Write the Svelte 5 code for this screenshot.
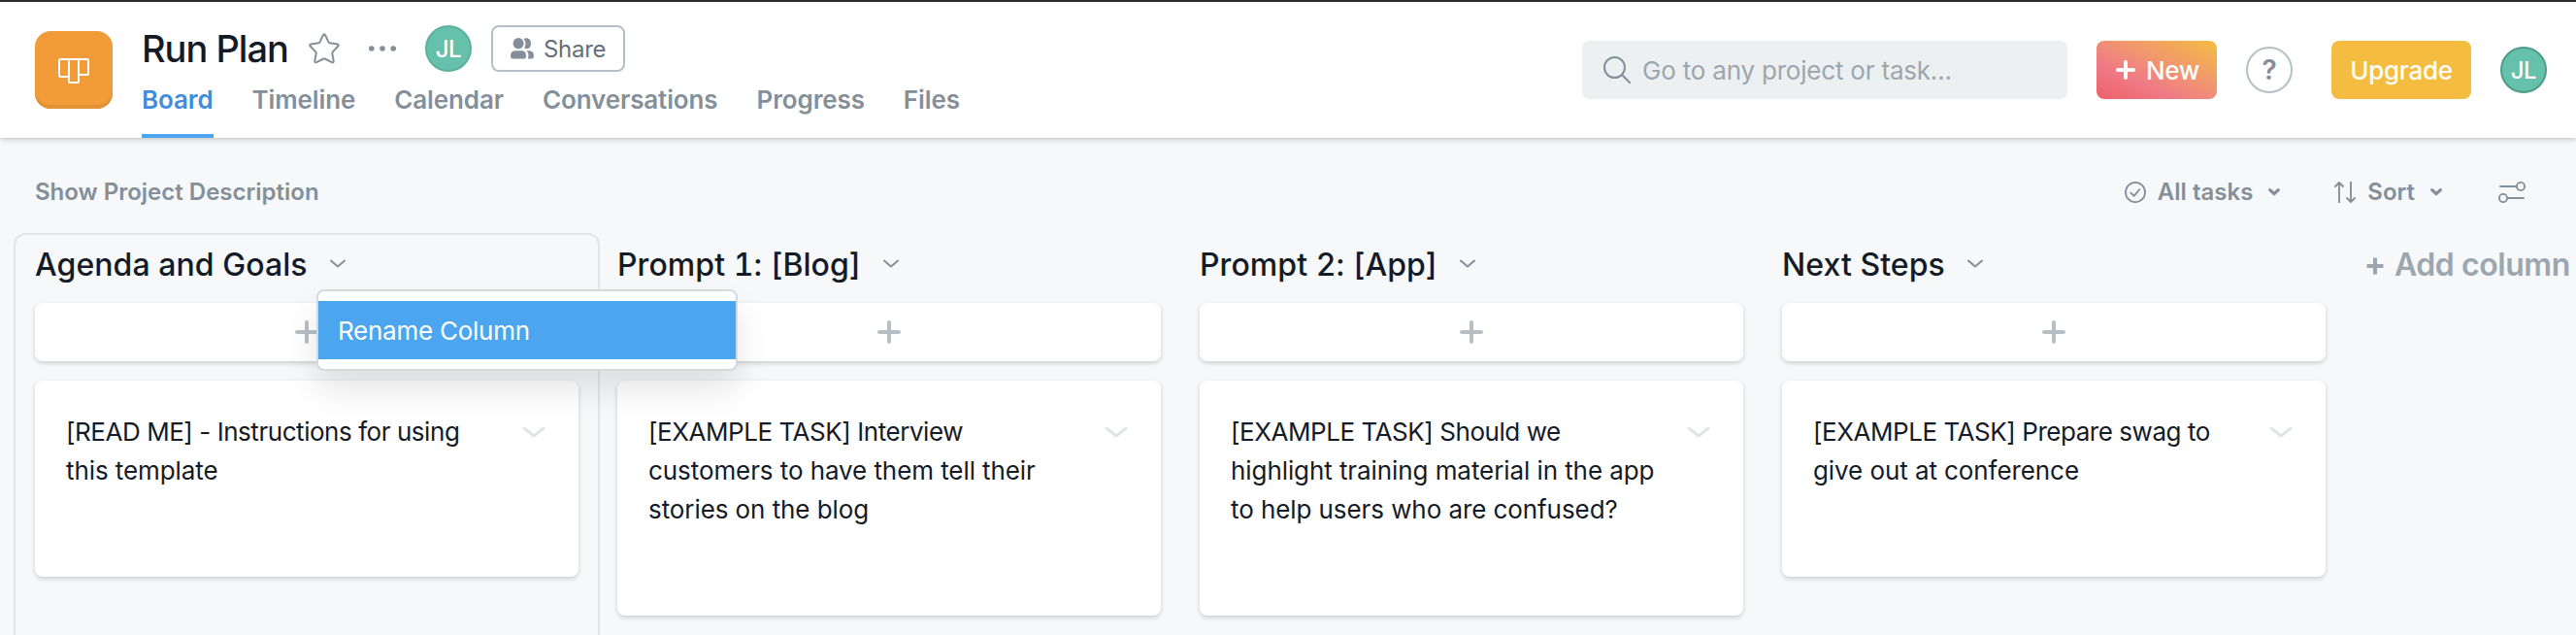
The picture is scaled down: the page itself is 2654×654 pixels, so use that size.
<script>
  const tabs = ["Board", "Timeline", "Calendar", "Conversations", "Progress", "Files"];
  let activeTab = $state("Board");
  let search = $state("");

  // column whose dropdown is open
  let openMenu = $state(0);

  const columns = [
    { name: "Agenda and Goals", tasks: ["[READ ME] - Instructions for using this template"] },
    {
      name: "Prompt 1: [Blog]",
      tasks: ["[EXAMPLE TASK] Interview customers to have them tell their stories on the blog"],
    },
    {
      name: "Prompt 2: [App]",
      tasks: ["[EXAMPLE TASK] Should we highlight training material in the app to help users who are confused?"],
    },
    { name: "Next Steps", tasks: ["[EXAMPLE TASK] Prepare swag to give out at conference"] },
  ];

  function toggleMenu(i) {
    openMenu = openMenu === i ? -1 : i;
  }
</script>

{#snippet smallChevron()}
  <svg class="smallChevron" width="12" height="8" viewBox="0 0 12 8">
    <path d="M1.7 1.7 L6 5.7 L10.3 1.7" />
  </svg>
{/snippet}

<div class="page">
  <header class="topbar">
    <div class="projectIcon">
      <svg width="32" height="26" viewBox="0 0 32 26">
        <path d="M11 19 H2.5 Q1 19 1 17.5 V2.5 Q1 1 2.5 1 H29.5 Q31 1 31 2.5 V15.5 Q31 17 29.5 17 H21" />
        <path d="M11 1 V23.5 Q11 25 12.5 25 H19.5 Q21 25 21 23.5 V1" />
      </svg>
    </div>

    <div class="project">
      <div class="titleRow">
        <h1>Run Plan</h1>
        <svg class="star" width="32" height="32" viewBox="0 0 32 32">
          <path
            d="M14.9 2.2 Q16 0.4 17.1 2.2 L20.6 9.6 Q20.9 10.2 21.6 10.3 L29.6 11.5 Q31.6 12 30.3 13.5 L24.6 19.6 Q24.1 20.1 24.3 20.8 L25.7 28.9 Q25.7 31 23.8 30.2 L16.7 26.5 Q16 26.1 15.3 26.5 L8.2 30.2 Q6.3 31 6.3 28.9 L7.7 20.8 Q7.9 20.1 7.4 19.6 L1.7 13.5 Q0.4 12 2.4 11.5 L10.4 10.3 Q11.1 10.2 11.4 9.6 Z" />
        </svg>
        <svg class="dots" width="28" height="6" viewBox="0 0 28 6">
          <circle cx="2.8" cy="3" r="2.8" />
          <circle cx="14" cy="3" r="2.8" />
          <circle cx="25.2" cy="3" r="2.8" />
        </svg>
        <div class="avatar member">JL</div>
        <button class="share">
          <svg width="24" height="22" viewBox="0 0 24 22">
            <path d="M13.5 1 C17.6 -1.2 21.2 1.5 21 6 C20.9 9 19.5 11.2 17 11.2 C16 11.2 15 10.8 14.3 10.3 C16.2 7 15.8 3.5 13.5 1 Z" />
            <ellipse cx="8.1" cy="5.7" rx="5.5" ry="5.7" />
            <path d="M0 18.5 C0 15 2 13.2 5 13.2 H11.3 C14.3 13.2 16 15 16 18.5 C16 20.6 15.5 21.4 14 21.4 H2.3 C0.8 21.4 0 20.6 0 18.5 Z" />
            <path d="M16.4 13.2 H18.5 C21.8 13.2 24 15 24 18.5 C24 20.6 23.2 21.4 21.8 21.4 H17.9 C19 18 18.6 15.2 16.4 13.2 Z" />
          </svg>
          <span>Share</span>
        </button>
      </div>
      <nav class="tabs">
        {#each tabs as tab}
          <button class="tab" class:active={tab === activeTab} onclick={() => (activeTab = tab)}>{tab}</button>
        {/each}
      </nav>
    </div>

    <div class="actions">
      <label class="search">
        <svg width="28" height="28" viewBox="0 0 28 28">
          <circle cx="11.5" cy="11.5" r="10.5" />
          <path d="M19 19 L27 27" />
        </svg>
        <input type="text" placeholder="Go to any project or task..." bind:value={search} />
      </label>
      <button class="new">
        <svg width="20" height="20" viewBox="0 0 20 20">
          <path d="M10 2 V18 M2 10 H18" />
        </svg>
        <span>New</span>
      </button>
      <button class="help">?</button>
      <button class="upgrade">Upgrade</button>
      <div class="avatar me">JL</div>
    </div>
  </header>

  <div class="toolbar">
    <button class="description">Show Project Description</button>
    <div class="filters">
      <button class="filter">
        <svg class="lineIcon" width="22" height="22" viewBox="0 0 22 22">
          <circle cx="11" cy="11" r="10.1" />
          <path d="M6.3 11.6 L9.6 14.8 L15.4 8" />
        </svg>
        <span>All tasks</span>
        {@render smallChevron()}
      </button>
      <button class="filter sort">
        <svg class="lineIcon" width="22" height="22" viewBox="0 0 22 22">
          <path d="M5 21.4 V1 M1 5 L5 1 L9 5 M17 0.6 V21 M13 17 L17 21 L21 17" />
        </svg>
        <span>Sort</span>
        {@render smallChevron()}
      </button>
      <svg class="lineIcon" width="28" height="22" viewBox="0 0 28 22">
        <path d="M2 5 H18.5 M9.5 17 H26" />
        <circle cx="23" cy="5" r="4.1" />
        <circle cx="5" cy="17" r="4.1" />
      </svg>
    </div>
  </div>

  <main class="board">
    {#each columns as column, i}
      <section class="column" class:highlight={openMenu === i}>
        <div class="columnHeader">
          <h2>{column.name}</h2>
          <button class="columnToggle" aria-label="Column menu" onclick={() => toggleMenu(i)}>
            <svg width="16" height="10" viewBox="0 0 16 10">
              <path d="M1 1.5 L8 7.5 L15 1.5" />
            </svg>
          </button>
          {#if openMenu === i}
            <div class="menu">
              <button class="menuItem">Rename Column</button>
            </div>
          {/if}
        </div>
        <button class="addTask" aria-label="Add task">
          <svg width="24" height="24" viewBox="0 0 24 24">
            <path d="M12 2 V22 M2 12 H22" />
          </svg>
        </button>
        {#each column.tasks as task}
          <article class="card">
            <p>{task}</p>
            <svg width="24" height="14" viewBox="0 0 24 14">
              <path d="M2 2 L12 10 L22 2" />
            </svg>
          </article>
        {/each}
      </section>
    {/each}
    <button class="addColumn">
      <svg width="18" height="18" viewBox="0 0 18 18">
        <path d="M9 0.5 V17.5 M0.5 9 H17.5" />
      </svg>
      <span>Add column</span>
    </button>
  </main>
</div>

<style>
  :global(body) {
    margin: 0;
    background: #f6f8f9;
  }

  .page {
    height: 654px;
    overflow: hidden;
    box-sizing: border-box;
    border-top: 2px solid #2b2a2e;
    font-family: Inter, "Liberation Sans", sans-serif;
    color: #151b26;
  }

  button {
    border: none;
    padding: 0;
    background: none;
    font: inherit;
    letter-spacing: inherit;
    color: inherit;
    white-space: nowrap;
  }

  svg {
    flex: none;
    display: block;
    fill: none;
    stroke-linecap: round;
    stroke-linejoin: round;
  }

  h1,
  h2,
  p {
    margin: 0;
    font-weight: 500;
  }

  .topbar {
    position: relative;
    display: flex;
    height: 140px;
    box-sizing: border-box;
    padding: 0 30px 0 36px;
    background: #fff;
    box-shadow: 0 1px 6px rgba(0, 0, 0, 0.25);
  }

  .projectIcon {
    display: flex;
    align-items: center;
    justify-content: center;
    width: 80px;
    height: 80px;
    box-sizing: border-box;
    margin-top: 30px;
    padding-top: 2px;
    border-radius: 16px;
    background: #f19c38;
    box-shadow: inset 0 -4px 0 #e09234;
  }

  .projectIcon svg {
    stroke: #fff;
    stroke-width: 2;
  }

  .project {
    display: flex;
    flex-direction: column;
    margin-left: 30px;
  }

  .titleRow {
    display: flex;
    align-items: center;
    height: 48px;
    margin-top: 24px;
  }

  h1 {
    width: 152px;
    font-size: 38px;
    letter-spacing: -1px;
    white-space: nowrap;
  }

  .star {
    margin-left: 20px;
    stroke: #848f99;
    stroke-width: 2;
  }

  .dots {
    margin-left: 30px;
    fill: #848f99;
  }

  .avatar {
    display: flex;
    align-items: center;
    justify-content: center;
    width: 48px;
    height: 48px;
    box-sizing: border-box;
    border-radius: 50%;
    border: 2px solid #5cb09c;
    background: #65c1ac;
    color: #fff;
    font-size: 24px;
    font-weight: 500;
    letter-spacing: -0.5px;
  }

  .member {
    margin-left: 30px;
  }

  .me {
    margin-left: 30px;
    border-color: #4e9c88;
  }

  .share {
    display: flex;
    align-items: center;
    gap: 10px;
    width: 138px;
    height: 48px;
    box-sizing: border-box;
    margin-left: 20px;
    padding: 0 18px;
    border: 2px solid #b7bfc6;
    border-radius: 8px;
    color: #646f79;
    font-size: 24px;
    letter-spacing: -0.3px;
  }

  .share svg {
    fill: #848f99;
  }

  .tabs {
    display: flex;
    gap: 40px;
    flex: 1;
    letter-spacing: -0.12px;
  }

  .tab {
    box-sizing: border-box;
    padding-bottom: 12px;
    border-top: 4px solid transparent;
    border-bottom: 4px solid transparent;
    color: #848f99;
    font-size: 26px;
    font-weight: 600;
  }

  .active {
    border-bottom-color: #4ba6ef;
    color: #3f8ddf;
  }

  .actions {
    display: flex;
    align-items: center;
    height: 60px;
    margin: 40px 0 0 auto;
    font-size: 26px;
    font-weight: 500;
  }

  .search {
    display: flex;
    align-items: center;
    gap: 12px;
    width: 500px;
    height: 60px;
    box-sizing: border-box;
    padding: 0 22px;
    border-radius: 8px;
    background: #ecf0f1;
  }

  .search svg {
    stroke: #848f99;
    stroke-width: 2;
  }

  .search input {
    flex: 1;
    min-width: 0;
    padding: 0;
    border: none;
    outline: none;
    background: none;
    font: inherit;
    font-weight: 400;
    letter-spacing: -0.2px;
  }

  .search input::placeholder {
    color: #9ca6af;
    opacity: 1;
  }

  .new {
    display: flex;
    align-items: center;
    gap: 11px;
    width: 124px;
    height: 60px;
    box-sizing: border-box;
    margin-left: 30px;
    padding-left: 20px;
    border-radius: 8px;
    background: linear-gradient(25deg, #ee5f68 0%, #ef7a86 32%, #f19273 55%, #f3bd43 100%);
    color: #fff;
    letter-spacing: -0.4px;
  }

  .new svg {
    stroke: #fff;
    stroke-width: 4;
  }

  .help {
    width: 48px;
    height: 48px;
    margin-left: 30px;
    border: 2px solid #b7bfc6;
    border-radius: 50%;
    color: #848f99;
    font-size: 28px;
    font-weight: 600;
  }

  .upgrade {
    width: 144px;
    height: 60px;
    margin-left: 40px;
    border-radius: 8px;
    background: #f4bd42;
    color: #fff;
    letter-spacing: -0.3px;
  }

  .toolbar {
    display: flex;
    align-items: center;
    justify-content: space-between;
    height: 112px;
    box-sizing: border-box;
    padding: 0 52px 1px 36px;
    color: #848f99;
    font-size: 24px;
    font-weight: 600;
  }

  .filters,
  .filter {
    display: flex;
    align-items: center;
  }

  .filter span {
    margin: 0 16px 0 12px;
  }

  .sort {
    margin: 0 58px 0 56px;
  }

  .lineIcon {
    stroke: #848f99;
    stroke-width: 1.9;
  }

  .smallChevron {
    stroke: #848f99;
    stroke-width: 3.2;
  }

  .board {
    display: flex;
    height: 414px;
    margin-top: -14px;
    padding-left: 14px;
  }

  .column {
    display: flex;
    flex-direction: column;
    flex: none;
    width: 604px;
    height: 500px;
    box-sizing: border-box;
    margin-right: -4px;
    padding: 0 20px;
    border: 2px solid transparent;
    border-radius: 12px;
  }

  .highlight {
    border-color: #e0e6e8;
  }

  .columnHeader {
    position: relative;
    display: flex;
    align-items: center;
    height: 60px;
    margin-bottom: 10px;
  }

  h2 {
    font-size: 32px;
    font-variant-numeric: tabular-nums;
    letter-spacing: 0.06px;
  }

  .columnToggle {
    margin-left: 23px;
  }

  .columnToggle svg {
    stroke: #848f99;
    stroke-width: 2;
  }

  .menu {
    position: absolute;
    top: 56px;
    left: 290px;
    z-index: 2;
    width: 434px;
    box-sizing: border-box;
    padding: 10px 0;
    border: 2px solid #d3dadf;
    border-radius: 8px;
    background: #fff;
    box-shadow: 0 20px 34px rgba(0, 0, 0, 0.1);
  }

  .menuItem {
    display: block;
    width: 100%;
    height: 60px;
    padding-left: 20px;
    background: #4ba6ef;
    color: #fff;
    font-size: 26px;
    letter-spacing: -0.25px;
    text-align: left;
  }

  .addTask,
  .card {
    border-radius: 8px;
    background: #fff;
    box-shadow: 0 2px 5px rgba(0, 0, 0, 0.18);
  }

  .addTask {
    display: flex;
    align-items: center;
    justify-content: center;
    height: 60px;
  }

  .addTask svg {
    stroke: #b7bfc6;
    stroke-width: 4;
  }

  .card {
    display: flex;
    align-items: flex-start;
    justify-content: space-between;
    margin-top: 20px;
    padding: 33px 34px 89px 32px;
  }

  .card p {
    width: 440px;
    font-size: 26px;
    font-weight: 400;
    line-height: 40px;
    letter-spacing: -0.08px;
  }

  /* the bracketed tag sits on the first line */
  .card p::first-line {
    letter-spacing: -0.45px;
  }

  .card svg {
    margin-top: 14px;
    stroke: #e0e6e8;
    stroke-width: 3;
  }

  .addColumn {
    display: flex;
    align-items: center;
    gap: 11px;
    height: 65px;
    margin-left: 24px;
    color: #9ca6af;
    font-size: 32px;
    font-weight: 600;
    letter-spacing: -0.45px;
  }

  .addColumn svg {
    margin-top: 2px;
    stroke: #9ca6af;
    stroke-width: 4;
    stroke-linecap: butt;
  }
</style>
